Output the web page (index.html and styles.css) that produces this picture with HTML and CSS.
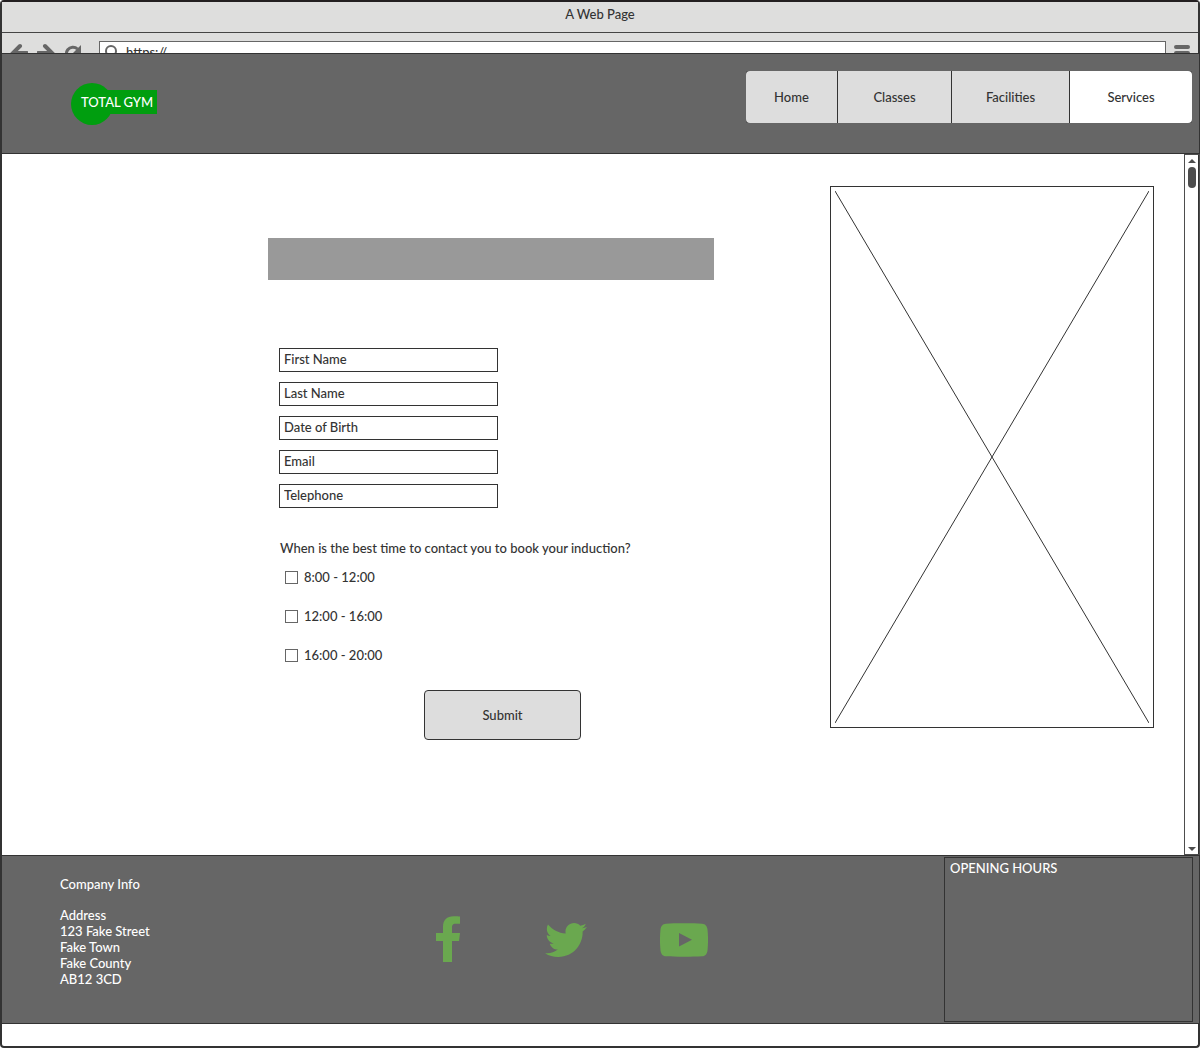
FILE: index.html
```html
<!DOCTYPE html>
<html lang="en">
<head>
<meta charset="utf-8">
<meta name="viewport" content="width=device-width, initial-scale=1">
<title>A Web Page</title>
<link rel="stylesheet" href="styles.css">
</head>
<body>
<div class="window">
  <div class="titlebar">A Web Page</div>
  <div class="toolbar">
    <div class="toolbar-buttons">
      <button class="tool" type="button" aria-label="Back"><svg width="18" height="18" viewBox="0 0 18 18"><path d="M10 3 3 10l7 7M3 10h14" fill="none" stroke="#666" stroke-width="4" stroke-linecap="round"/></svg></button>
      <button class="tool" type="button" aria-label="Forward"><svg width="18" height="18" viewBox="0 0 18 18"><path d="m8 3 7 7-7 7M15 10H1" fill="none" stroke="#666" stroke-width="4" stroke-linecap="round"/></svg></button>
      <button class="tool" type="button" aria-label="Reload"><svg width="18" height="18" viewBox="0 0 18 18"><path d="M13.500 6A6.500 6.500 0 1 0 15 13" fill="none" stroke="#666" stroke-width="3"/><path d="M17 2v8H9z" fill="#666"/></svg></button>
    </div>
    <div class="address">
      <svg width="16" height="20" viewBox="0 0 16 20"><circle cx="7" cy="8" r="5" fill="none" stroke="#666" stroke-width="2"/><path d="m11 12 3 4" stroke="#666" stroke-width="2"/></svg>
      <input class="address-input" type="text" aria-label="Address" value="https://">
    </div>
    <button class="tool" type="button" aria-label="Menu"><svg width="16" height="18" viewBox="0 0 16 18"><path d="M2 4h12M2 10h12M2 16h12" stroke="#666" stroke-width="4" stroke-linecap="round"/></svg></button>
  </div>

  <header class="site-header">
    <a class="logo" href="#"><span class="logo-circle"></span><span class="logo-text">TOTAL GYM</span></a>
    <nav class="nav">
      <a class="nav-link" href="#">Home</a>
      <a class="nav-link" href="#">Classes</a>
      <a class="nav-link" href="#">Facilities</a>
      <a class="nav-link nav-link-current" href="#" aria-current="page">Services</a>
    </nav>
  </header>

  <div class="viewport">
    <main class="content">
      <section class="booking">
        <div class="banner"></div>
        <form class="form">
          <div class="fields">
            <input class="field" type="text" aria-label="First Name" placeholder="First Name">
            <input class="field" type="text" aria-label="Last Name" placeholder="Last Name">
            <input class="field" type="text" aria-label="Date of Birth" placeholder="Date of Birth">
            <input class="field" type="email" aria-label="Email" placeholder="Email">
            <input class="field" type="tel" aria-label="Telephone" placeholder="Telephone">
          </div>
          <fieldset class="times">
            <legend class="question">When is the best time to contact you to book your induction?</legend>
            <label class="time"><input class="check" type="checkbox">8:00 - 12:00</label>
            <label class="time"><input class="check" type="checkbox">12:00 - 16:00</label>
            <label class="time"><input class="check" type="checkbox">16:00 - 20:00</label>
          </fieldset>
          <button class="submit" type="submit">Submit</button>
        </form>
      </section>
      <div class="picture">
        <svg class="cross" viewBox="0 0 314 532" preserveAspectRatio="none"><path d="M0 0l314 532M314 0 0 532" stroke="#333" fill="none"/></svg>
      </div>
    </main>
    <div class="scrollbar">
      <div class="scroll-top">
        <svg width="8" height="4" viewBox="0 0 8 4"><path d="M4 0l4 4H0z" fill="#4d4d4d"/></svg>
        <div class="thumb"></div>
      </div>
      <svg width="8" height="4" viewBox="0 0 8 4"><path d="M0 0h8L4 4z" fill="#4d4d4d"/></svg>
    </div>
  </div>

  <footer class="site-footer">
    <div class="company">
      <p class="company-title">Company Info</p>
      <address class="company-address">Address<br>123 Fake Street<br>Fake Town<br>Fake County<br>AB12 3CD</address>
    </div>
    <div class="social">
      <a class="social-link" href="#" aria-label="Facebook"><svg width="24" height="48" viewBox="0 0 24 48"><path d="M24 .6v7.200h-4.500C16.500 7.800 16 9.500 16 12v5h8l-1 8h-7v21H7V25H0v-8h7v-6C7 4 11 .3 17.500 .3 20.500 .3 23 .4 24 .6z" fill="#6aa84f"/></svg></a>
      <a class="social-link" href="#" aria-label="Twitter"><svg width="42" height="34" viewBox="0 48 512 416"><path d="M459.370 151.716c.325 4.548.325 9.097.325 13.645 0 138.720-105.583 298.558-298.558 298.558-59.452 0-114.680-17.219-161.137-47.106 8.447.974 16.568 1.299 25.340 1.299 49.055 0 94.213-16.568 130.274-44.832-46.132-.975-84.792-31.188-98.112-72.772 6.498.974 12.995 1.624 19.818 1.624 9.421 0 18.843-1.300 27.614-3.573-48.081-9.747-84.143-51.980-84.143-102.985v-1.299c13.969 7.797 30.214 12.670 47.431 13.319-28.264-18.843-46.781-51.005-46.781-87.391 0-19.492 5.197-37.360 14.294-52.954 51.655 63.675 129.300 105.258 216.365 109.807-1.624-7.797-2.599-15.918-2.599-24.040 0-57.828 46.782-104.934 104.934-104.934 30.213 0 57.502 12.670 76.670 33.137 23.715-4.548 46.456-13.320 66.599-25.340-7.798 24.366-24.366 44.833-46.132 57.827 21.117-2.273 41.584-8.122 60.426-16.243-14.292 20.791-32.161 39.308-52.628 54.253z" fill="#6aa84f"/></svg></a>
      <a class="social-link" href="#" aria-label="YouTube"><svg width="48" height="34" viewBox="0 0 48 34"><path fill-rule="evenodd" d="M6 .7C15 .1 33 .1 42 .7c3.500.2 5 2.500 5.500 5.800.7 7 .7 14 0 21-.5 3.500-2 5.600-5.500 5.800-9 .6-27 .6-36 0-3.500-.2-5-2.300-5.500-5.800-.7-7-.7-14 0-21C1 3.200 2.500.9 6 .7zM19 10v13.500l13-6.800z" fill="#6aa84f"/></svg></a>
    </div>
    <section class="hours">OPENING HOURS</section>
  </footer>
</div>
</body>
</html>
```

FILE: styles.css
```css
* {
  box-sizing: border-box;
}

body {
  margin: 0;
  background: #fff;
}

body,
input,
button {
  font-family: Lato, "Liberation Sans", sans-serif;
  font-size: 13px;
  font-weight: 500;
  line-height: 16px;
  color: #333;
}

svg {
  display: block;
}

a {
  color: inherit;
  text-decoration: none;
}

.window {
  display: flex;
  flex-direction: column;
  min-height: 100vh;
  padding-bottom: 22px;
  border: 2px solid #333;
  border-top-color: #231f20;
  border-radius: 4px;
}

/* Browser chrome */

.titlebar {
  height: 31px;
  padding-top: 4px;
  border-bottom: 1px solid #444;
  background: #dededd;
  text-align: center;
}

.toolbar {
  display: flex;
  align-items: flex-start;
  gap: 8px;
  height: 20px;
  padding: 8px 8px 0;
  overflow: hidden;
  background: #dededd;
}

.toolbar-buttons {
  display: flex;
  gap: 9px;
  width: 81px;
}

.tool {
  padding: 2px 0 0;
  border: 0;
  background: none;
}

.address {
  display: flex;
  flex: 1;
  gap: 4px;
  height: 24px;
  padding: 1px 4px;
  border: 1px solid #666;
  background: #fff;
}

.address-input {
  flex: 1;
  min-width: 0;
  height: 18px;
  padding: 0 2px;
  border: 0;
  background: none;
}

/* Header */

.site-header {
  display: flex;
  justify-content: space-between;
  align-items: flex-start;
  min-height: 101px;
  margin: 0 -2px 0 -1px;
  padding: 17px 7px 16px 69px;
  border: 1px solid #333;
  background: #666;
}

.logo {
  display: grid;
  align-items: center;
  margin-top: 12px;
  color: #fff;
}

.logo-circle,
.logo-text {
  grid-area: 1 / 1;
}

.logo-circle {
  width: 42px;
  height: 42px;
  border-radius: 50%;
  background: #009e0f;
}

.logo-text {
  width: 76px;
  margin: 0 0 4px 10px;
  padding: 4px 0;
  background: #009e0f;
  white-space: nowrap;
}

.nav {
  display: grid;
  grid-template-columns: 91px 113px 117px 122px;
  gap: 1px;
  border-radius: 2px;
  background: #333;
}

.nav-link {
  padding: 18px 0;
  background: #ddd;
  text-align: center;
}

.nav-link:first-child {
  border-radius: 4px 0 0 4px;
}

.nav-link:last-child {
  border-radius: 0 4px 4px 0;
}

.nav-link-current {
  background: #fff;
}

/* Page content */

.viewport {
  display: flex;
  flex: 1;
}

.content {
  display: grid;
  flex: 1;
  grid-template-columns: minmax(16px, 266fr) minmax(0, 446px) minmax(16px, 116fr) minmax(0, 324px);
  align-items: start;
  padding: 32px 30px 32px 0;
}

.booking {
  grid-column: 2;
  padding-top: 52px;
}

.banner {
  height: 42px;
  background: #999;
}

.form {
  padding: 68px 0 0 11px;
}

.fields {
  display: flex;
  flex-direction: column;
  gap: 10px;
  width: 219px;
}

.field {
  height: 24px;
  padding: 0 4px 2px;
  border: 1px solid #333;
  border-radius: 0;
  background: #fff;
}

.field::placeholder {
  color: #333;
  opacity: 1;
}

.times {
  display: flex;
  flex-direction: column;
  gap: 23px;
  margin: 32px 0 0;
  padding: 0;
  border: 0;
}

.question {
  margin-bottom: 13px;
  padding: 0 1px;
}

.time {
  display: flex;
  align-items: center;
  gap: 6px;
  padding-left: 6px;
}

.check {
  width: 13px;
  height: 13px;
  margin: 0;
  border: 1px solid #666;
  background: #fff;
  appearance: none;
}

.check:checked {
  background: #666;
}

.submit {
  display: block;
  width: 157px;
  height: 50px;
  margin: 27px 0 0 145px;
  border: 1px solid #333;
  border-radius: 4px;
  background: #ddd;
}

.picture {
  grid-column: 4;
  padding: 4px;
  border: 1px solid #333;
}

.cross {
  width: 100%;
  height: auto;
}

.scrollbar {
  display: flex;
  flex-direction: column;
  justify-content: space-between;
  align-items: center;
  width: 16px;
  margin-right: -2px;
  padding: 4px 0 3px;
  border: 1px solid #4d4d4d;
}

.scroll-top {
  display: flex;
  flex-direction: column;
  align-items: center;
  gap: 4px;
}

.thumb {
  width: 8px;
  height: 21px;
  border-radius: 4px;
  background: #4d4d4d;
}

/* Footer */

.site-footer {
  display: grid;
  grid-template-columns: minmax(0, 364fr) minmax(0, 520fr) 249px;
  min-height: 169px;
  margin: 0 -2px 0 -1px;
  padding: 1px 6px 1px 58px;
  border: 1px solid #333;
  background: #666;
  color: #fff;
}

.company {
  padding-top: 19px;
}

.company-title {
  margin: 0 0 15px;
}

.company-address {
  font-style: normal;
}

.social {
  display: flex;
  align-items: center;
  gap: 70px;
}

.social-link {
  display: flex;
  justify-content: center;
  width: 48px;
}

.hours {
  padding: 2px 5px;
  border: 1px solid #333;
}
```
